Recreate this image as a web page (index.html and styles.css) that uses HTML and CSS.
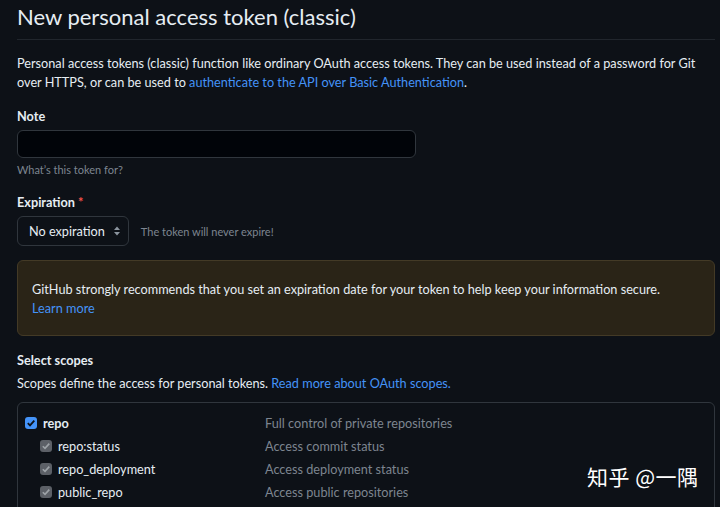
FILE: index.html
```html
<!DOCTYPE html>
<html lang="en">
<head>
<meta charset="utf-8">
<title>New personal access token (classic)</title>
<link rel="stylesheet" href="styles.css">
</head>
<body>
<main class="page">
  <h1 class="title">New personal access token (classic)</h1>
  <p class="intro">Personal access tokens (classic) function like ordinary OAuth access tokens. They can be used instead of a password for Git over HTTPS, or can be used to <a href="#">authenticate to the API over Basic Authentication</a>.</p>

  <div class="field note-field">
    <label class="label">Note</label>
    <div class="input"></div>
    <p class="hint">What’s this token for?</p>
  </div>

  <div class="field exp-field">
    <label class="label">Expiration <span class="req">*</span></label>
    <div class="exp-row">
      <div class="select">No expiration
        <svg class="updown" width="8" height="12" viewBox="0 0 8 12"><path d="M4 1.5 7 5H1z M4 10.5 1 7h6z" fill="#8b949e"/></svg>
      </div>
      <span class="exp-note">The token will never expire!</span>
    </div>
  </div>

  <div class="flash">
    GitHub strongly recommends that you set an expiration date for your token to help keep your information secure.<br>
    <a href="#">Learn more</a>
  </div>

  <h2 class="label scopes-title">Select scopes</h2>
  <p class="scopes-desc">Scopes define the access for personal tokens. <a href="#">Read more about OAuth scopes.</a></p>

  <div class="scopes">
    <div class="scope main">
      <span class="name"><span class="cb on"><svg width="10" height="10" viewBox="0 0 10 10"><path d="M1.8 5.2 4 7.4 8.3 2.6" fill="none" stroke="#0d1117" stroke-width="1.8"/></svg></span><b>repo</b></span>
      <span class="desc">Full control of private repositories</span>
    </div>
    <div class="scope sub">
      <span class="name"><span class="cb dis"><svg width="10" height="10" viewBox="0 0 10 10"><path d="M1.8 5.2 4 7.4 8.3 2.6" fill="none" stroke="#9ea3a8" stroke-width="1.6"/></svg></span>repo:status</span>
      <span class="desc">Access commit status</span>
    </div>
    <div class="scope sub">
      <span class="name"><span class="cb dis"><svg width="10" height="10" viewBox="0 0 10 10"><path d="M1.8 5.2 4 7.4 8.3 2.6" fill="none" stroke="#9ea3a8" stroke-width="1.6"/></svg></span>repo_deployment</span>
      <span class="desc">Access deployment status</span>
    </div>
    <div class="scope sub">
      <span class="name"><span class="cb dis"><svg width="10" height="10" viewBox="0 0 10 10"><path d="M1.8 5.2 4 7.4 8.3 2.6" fill="none" stroke="#9ea3a8" stroke-width="1.6"/></svg></span>public_repo</span>
      <span class="desc">Access public repositories</span>
    </div>
  </div>
</main>
<div class="watermark">知乎 @一隅</div>
</body>
</html>
```

FILE: styles.css
```css
html, body {
  margin: 0;
  padding: 0;
  background: #0d1117;
  color: #e6edf3;
  font-family: Lato, "Open Sans", sans-serif;
  font-size: 12.7px;
  overflow: hidden;
  height: 507px;
}
a { color: #4493f8; text-decoration: none; }
.page {
  padding: 0 5px 0 17px;
  width: 698px;
}
.title {
  font-weight: 400;
  font-size: 22px;
  margin: 0;
  padding: 2px 0 7px;
  line-height: 30px;
  border-bottom: 1px solid #21262d;
}
.intro {
  margin: 14px 0 0;
  line-height: 19px;
}
.label {
  display: block;
  font-weight: 700;
  font-size: 12.7px;
  line-height: 18px;
  margin: 0;
}
.note-field { margin-top: 15px; }
.exp-field { margin-top: 16px; }
.req { color: #f85149; }
.input {
  margin-top: 5px;
  width: 397px;
  height: 26px;
  background: #010409;
  border: 1px solid #30363d;
  border-radius: 6px;
}
.hint {
  margin: 5px 0 0;
  font-size: 11px;
  color: #7d8590;
  line-height: 14px;
}
.exp-row {
  display: flex;
  align-items: center;
  gap: 12px;
  margin-top: 5px;
}
.select {
  display: flex;
  align-items: center;
  gap: 8px;
  height: 28px;
  padding: 0 7px 0 11px;
  background: #0d1117;
  border: 1px solid #30363d;
  border-radius: 6px;
  font-size: 12.7px;
}
.exp-note {
  font-size: 11px;
  color: #7d8590;
}
.flash {
  margin-top: 14px;
  background: #2a2417;
  border: 1px solid #433a26;
  border-radius: 6px;
  padding: 19px 14px 17px 14px;
  line-height: 19px;
  font-size: 12.7px;
}
.scopes-title { margin-top: 15px; }
.scopes-desc { margin: 5px 0 0; line-height: 19px; }
.scopes {
  margin-top: 9px;
  border: 1px solid #30363d;
  border-radius: 6px;
  padding: 8px 0 0 7px;
  height: 120px;
}
.scope {
  display: grid;
  grid-template-columns: 240px 1fr;
  height: 23px;
  align-items: center;
}
.scope .name { display: flex; align-items: center; gap: 6px; }
.scope.sub .name { padding-left: 15px; }
.scope.main b { font-weight: 700; }
.desc { color: #7d8590; }
.cb {
  width: 12px;
  height: 12px;
  border-radius: 3px;
  display: inline-flex;
  align-items: center;
  justify-content: center;
}
.cb.on { background: #4493f8; }
.cb.dis { background: #5c6067; }
.watermark {
  position: absolute;
  left: 587px;
  top: 461px;
  font-family: "Noto Sans CJK SC", sans-serif;
  font-size: 21px;
  color: #ffffff;
  letter-spacing: 0.5px;
}
```
